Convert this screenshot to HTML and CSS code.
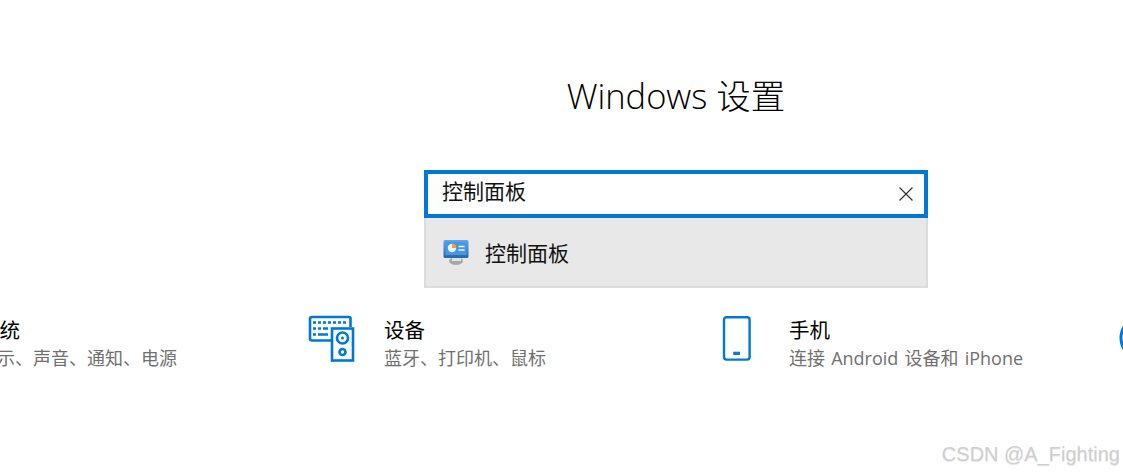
FILE: index.html
```html
<!DOCTYPE html>
<html lang="zh-CN">
<head>
    <meta charset="UTF-8">
    <meta name="viewport" content="width=device-width, initial-scale=1.0">
    <title>Windows 设置</title>
    <link rel="stylesheet" href="styles.css">
</head>
<body>
    <h1 class="page-title">Windows 设置</h1>

    <div class="search">
        <div class="search-box">
            <span class="search-text">控制面板</span>
            <svg class="search-clear" width="16" height="16" viewBox="0 0 16 16">
                <path d="M1.5 1.5L14.5 14.5M14.5 1.5L1.5 14.5" stroke="#333" stroke-width="1.2" fill="none"/>
            </svg>
        </div>
        <div class="search-result">
            <svg class="result-icon" width="26" height="26" viewBox="0 0 26 26">
                <defs>
                    <linearGradient id="screen" x1="0" y1="0" x2="0" y2="1">
                        <stop offset="0" stop-color="#5aa9ea"/>
                        <stop offset="1" stop-color="#1f68b4"/>
                    </linearGradient>
                </defs>
                <ellipse cx="13" cy="22" rx="7" ry="4" fill="#a8a8a8"/>
                <rect x="9" y="18" width="9" height="4" fill="#e2e2e2"/>
                <rect x="0.500" y="1" width="25" height="18" rx="1.500" fill="url(#screen)"/>
                <rect x="2.500" y="3" width="21" height="13" fill="#4b97dd"/>
                <circle cx="9" cy="9" r="4.200" fill="#eef3f8"/>
                <path d="M9 9V4.800A4.200 4.200 0 0 1 13.200 9z" fill="#f2a32c"/>
                <path d="M15.500 7.500h6M15.500 11h6" stroke="#e8f2fb" stroke-width="1.500"/>
            </svg>
            <span class="result-text">控制面板</span>
        </div>
    </div>

    <div class="tiles">
        <div class="tile">
            <div class="tile-icon"></div>
            <div class="tile-info">
                <h3 class="tile-title">系统</h3>
                <p class="tile-desc">显示、声音、通知、电源</p>
            </div>
        </div>
        <div class="tile">
            <div class="tile-icon">
                <svg width="48" height="48" viewBox="0 0 48 48" fill="none" stroke="#0078d7" stroke-width="2.600">
                    <path d="M23 25.500H4a2 2 0 0 1-2-2V4a2 2 0 0 1 2-2h37a1.500 1.500 0 0 1 1.500 1.500V12"/>
                    <path d="M5 7.500h3M10 7.500h3M15 7.500h3M20 7.500h3M25 7.500h3M30 7.500h3M35 7.500h3M5 13.500h3M10 13.500h3M15 13.500h5M5 19.500h3M10 19.500h10"/>
                    <rect x="24" y="13.500" width="21" height="32"/>
                    <circle cx="34.500" cy="23" r="5.500"/>
                    <circle cx="34.500" cy="23" r="1.500" fill="#0078d7" stroke="none"/>
                    <circle cx="34.500" cy="37" r="3"/>
                </svg>
            </div>
            <div class="tile-info">
                <h3 class="tile-title">设备</h3>
                <p class="tile-desc">蓝牙、打印机、鼠标</p>
            </div>
        </div>
        <div class="tile">
            <div class="tile-icon">
                <svg width="48" height="48" viewBox="0 0 48 48" fill="none" stroke="#0078d7" stroke-width="2.400">
                    <rect x="11" y="2.200" width="25.600" height="42.400" rx="2.500"/>
                    <rect x="20.800" y="37.200" width="5.700" height="2.300" fill="#0078d7" stroke-width="1"/>
                </svg>
            </div>
            <div class="tile-info">
                <h3 class="tile-title">手机</h3>
                <p class="tile-desc">连接 Android 设备和 iPhone</p>
            </div>
        </div>
        <div class="tile">
            <div class="tile-icon">
                <svg width="48" height="48" viewBox="0 0 48 48" fill="none" stroke="#0078d7" stroke-width="3">
                    <circle cx="24" cy="23" r="21"/>
                </svg>
            </div>
        </div>
    </div>

    <div class="watermark">CSDN @A_Fighting</div>
</body>
</html>
```

FILE: styles.css
```css
* {
    margin: 0;
    padding: 0;
    box-sizing: border-box;
}

body {
    position: relative;
    width: 1123px;
    height: 473px;
    overflow: hidden;
    background: white;
    color: #000;
    font-family: "Open Sans", "Noto Sans CJK SC", sans-serif;
}

.page-title {
    padding-top: 72px;
    padding-left: 229px;
    text-align: center;
    font-size: 34.5px;
    line-height: 48px;
    font-weight: 300;
    color: #000;
}

.search {
    width: 504px;
    margin-top: 50px;
    margin-left: 424px;
}

.search-box {
    display: flex;
    align-items: center;
    justify-content: space-between;
    height: 48px;
    padding: 0 10px 0 14px;
    border: 4px solid #0078d7;
    background: white;
}

.search-text {
    position: relative;
    top: -4px;
    font-family: "Noto Sans CJK SC", sans-serif;
    font-size: 21px;
    color: #111;
}

.result-text {
    font-family: "Noto Sans CJK SC", sans-serif;
    font-size: 21px;
    color: #111;
}

.search-result {
    display: flex;
    align-items: center;
    gap: 16px;
    height: 70px;
    padding-left: 17px;
    background: #e8e8e8;
    border: 2px solid #dcdcdc;
    border-top: none;
}

.tiles {
    display: flex;
    margin-top: 27px;
    margin-left: -97px;
}

.tile {
    display: flex;
    flex: none;
    width: 405px;
}

.tile-icon {
    flex: none;
    width: 76px;
}

.tile-title {
    margin-bottom: 2px;
    font-family: "Noto Sans CJK SC", sans-serif;
    font-size: 20.5px;
    line-height: 28px;
    font-weight: 400;
}

.tile-desc {
    font-family: "Open Sans", "Noto Sans CJK SC", sans-serif;
    font-size: 18px;
    line-height: 26px;
    word-spacing: 1.5px;
    color: #707070;
    white-space: nowrap;
}

.watermark {
    position: absolute;
    right: 3px;
    bottom: 7px;
    font-family: "Liberation Sans", sans-serif;
    font-size: 20px;
    color: #cfcfcf;
    text-shadow: 0 1px 1px #e8e8e8;
}
```
